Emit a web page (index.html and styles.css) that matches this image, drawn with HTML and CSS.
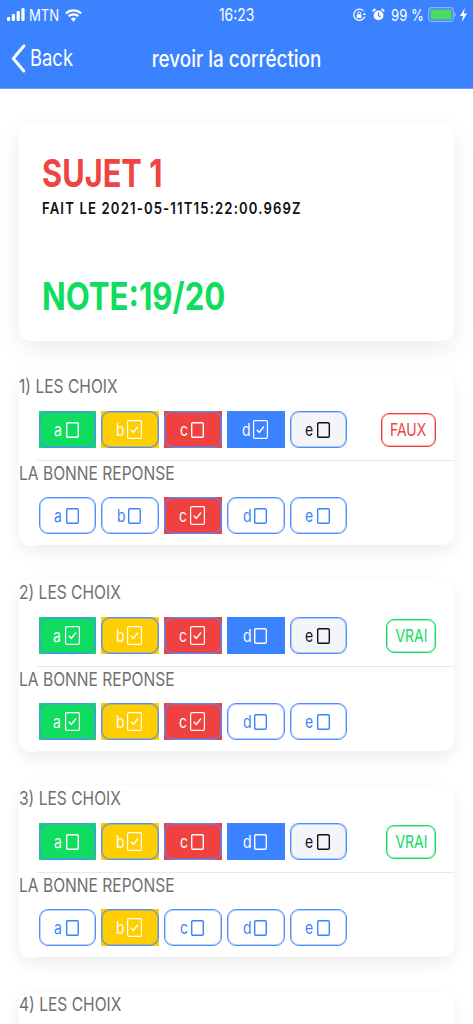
FILE: index.html
```html
<!DOCTYPE html>
<html lang="fr">
<head>
<meta charset="utf-8">
<title>revoir la corréction</title>
<link rel="stylesheet" href="styles.css">
</head>
<body>
<header class="top">
  <div class="status">
    <svg class="sig" viewBox="0 0 18 13"><rect x="0" y="9" width="3.200" height="4" rx="1"/><rect x="4.800" y="6" width="3.200" height="7" rx="1"/><rect x="9.600" y="3" width="3.200" height="10" rx="1"/><rect x="14.400" y="0" width="3.200" height="13" rx="1"/></svg>
    <span class="carrier"><span class="cond">MTN</span></span>
    <svg class="wifi" viewBox="0 0 17 14"><path d="M.9 5.400A11 11 0 0 1 16.100 5.400M3.600 8.300A7.200 7.200 0 0 1 13.400 8.300" fill="none" stroke="#fff" stroke-width="2.200"/><path d="M5.900 10.600A3.800 3.800 0 0 1 11.100 10.600L8.500 14Z" fill="#fff"/></svg>
    <div class="st-time"><span class="cond mid">16:23</span></div>
    <svg class="lock" viewBox="0 0 13 14"><path d="M10.400 2.700A5.600 5.600 0 1 0 11.800 8.600" fill="none" stroke="#fff" stroke-width="1.300"/><path d="M13 6.900H9.800L11.400 4.400Z" fill="#fff"/><rect x="3.800" y="6.200" width="4.800" height="3.800" rx=".6" fill="#fff"/><path d="M4.800 6.200V5.200A1.400 1.400 0 0 1 7.600 5.200V6.200" fill="none" stroke="#fff"/></svg>
    <svg class="alarm" viewBox="0 0 13 13"><circle cx="6.500" cy="7.400" r="4.900" fill="#fff"/><path d="M6.500 4.400V7.800L8.700 8.800" fill="none" stroke="#3b82ff" stroke-width="1.200"/><path d="M.7 3.400L3.400 1M12.300 3.400L9.600 1" stroke="#fff" stroke-width="1.800"/></svg>
    <span class="pct"><span class="cond">99 %</span></span>
    <svg class="batt" viewBox="0 0 29 15"><rect x=".6" y=".6" width="24.800" height="13.800" rx="3.500" fill="none" stroke="#8db5ff" stroke-width="1.200"/><rect x="2.400" y="2.600" width="21.200" height="9.800" rx="1.500" fill="#4cd964"/><path d="M26.500 5.200C28.500 5.600 28.500 9.400 26.500 9.800Z" fill="#8db5ff"/></svg>
    <svg class="bolt" viewBox="0 0 7 14"><path d="M4.800 0L0 8H3L1.900 14L7 5.600H3.800Z" fill="#fff"/></svg>
  </div>
  <div class="nav">
    <div class="back">
      <svg class="chev" viewBox="0 0 15 29"><path d="M12.800 2L2.300 14.500L12.800 27" fill="none" stroke="#fff" stroke-width="3" stroke-linecap="round" stroke-linejoin="round"/></svg>
      <span class="cond">Back</span>
    </div>
    <div class="title"><span class="cond mid">revoir la corréction</span></div>
  </div>
</header>

<main class="page">
  <section class="summary">
    <h1 class="subject"><span class="cond">SUJET 1</span></h1>
    <p class="date"><span class="cond">FAIT LE 2021-05-11T15:22:00.969Z</span></p>
    <p class="note"><span class="cond">NOTE:19/20</span></p>
  </section>

  <section class="q">
    <div class="q-label"><span class="cond">1) LES CHOIX</span></div>
    <div class="row">
      <div class="opt green"><span class="in"><span class="ltr">a</span><svg class="box"><use href="#off"/></svg></span></div>
      <div class="opt yellow wide"><span class="in"><span class="ltr">b</span><svg class="box on"><use href="#on"/></svg></span></div>
      <div class="opt red wide"><span class="in"><span class="ltr">c</span><svg class="box"><use href="#off"/></svg></span></div>
      <div class="opt blue wide"><span class="in"><span class="ltr">d</span><svg class="box on"><use href="#on"/></svg></span></div>
      <div class="opt grey"><span class="in"><span class="ltr">e</span><svg class="box"><use href="#off"/></svg></span></div>
      <div class="badge bad"><span class="cond mid">FAUX</span></div>
    </div>
    <div class="q-label lower"><span class="cond">LA BONNE REPONSE</span></div>
    <div class="row last">
      <div class="opt"><span class="in"><span class="ltr">a</span><svg class="box"><use href="#off"/></svg></span></div>
      <div class="opt wide"><span class="in"><span class="ltr">b</span><svg class="box"><use href="#off"/></svg></span></div>
      <div class="opt red wide"><span class="in"><span class="ltr">c</span><svg class="box on"><use href="#on"/></svg></span></div>
      <div class="opt wide"><span class="in"><span class="ltr">d</span><svg class="box"><use href="#off"/></svg></span></div>
      <div class="opt"><span class="in"><span class="ltr">e</span><svg class="box"><use href="#off"/></svg></span></div>
    </div>
    <div class="q-foot"></div>
  </section>

  <section class="q">
    <div class="q-label"><span class="cond">2) LES CHOIX</span></div>
    <div class="row">
      <div class="opt green"><span class="in"><span class="ltr">a</span><svg class="box on"><use href="#on"/></svg></span></div>
      <div class="opt yellow wide"><span class="in"><span class="ltr">b</span><svg class="box on"><use href="#on"/></svg></span></div>
      <div class="opt red wide"><span class="in"><span class="ltr">c</span><svg class="box on"><use href="#on"/></svg></span></div>
      <div class="opt blue wide"><span class="in"><span class="ltr">d</span><svg class="box"><use href="#off"/></svg></span></div>
      <div class="opt grey"><span class="in"><span class="ltr">e</span><svg class="box"><use href="#off"/></svg></span></div>
      <div class="badge good"><span class="cond mid">VRAI</span></div>
    </div>
    <div class="q-label lower"><span class="cond">LA BONNE REPONSE</span></div>
    <div class="row last">
      <div class="opt green"><span class="in"><span class="ltr">a</span><svg class="box on"><use href="#on"/></svg></span></div>
      <div class="opt yellow wide"><span class="in"><span class="ltr">b</span><svg class="box on"><use href="#on"/></svg></span></div>
      <div class="opt red wide"><span class="in"><span class="ltr">c</span><svg class="box on"><use href="#on"/></svg></span></div>
      <div class="opt wide"><span class="in"><span class="ltr">d</span><svg class="box"><use href="#off"/></svg></span></div>
      <div class="opt"><span class="in"><span class="ltr">e</span><svg class="box"><use href="#off"/></svg></span></div>
    </div>
    <div class="q-foot"></div>
  </section>

  <section class="q">
    <div class="q-label"><span class="cond">3) LES CHOIX</span></div>
    <div class="row">
      <div class="opt green"><span class="in"><span class="ltr">a</span><svg class="box"><use href="#off"/></svg></span></div>
      <div class="opt yellow wide"><span class="in"><span class="ltr">b</span><svg class="box on"><use href="#on"/></svg></span></div>
      <div class="opt red wide"><span class="in"><span class="ltr">c</span><svg class="box"><use href="#off"/></svg></span></div>
      <div class="opt blue wide"><span class="in"><span class="ltr">d</span><svg class="box"><use href="#off"/></svg></span></div>
      <div class="opt grey"><span class="in"><span class="ltr">e</span><svg class="box"><use href="#off"/></svg></span></div>
      <div class="badge good"><span class="cond mid">VRAI</span></div>
    </div>
    <div class="q-label lower"><span class="cond">LA BONNE REPONSE</span></div>
    <div class="row last">
      <div class="opt"><span class="in"><span class="ltr">a</span><svg class="box"><use href="#off"/></svg></span></div>
      <div class="opt yellow wide"><span class="in"><span class="ltr">b</span><svg class="box on"><use href="#on"/></svg></span></div>
      <div class="opt wide"><span class="in"><span class="ltr">c</span><svg class="box"><use href="#off"/></svg></span></div>
      <div class="opt wide"><span class="in"><span class="ltr">d</span><svg class="box"><use href="#off"/></svg></span></div>
      <div class="opt"><span class="in"><span class="ltr">e</span><svg class="box"><use href="#off"/></svg></span></div>
    </div>
    <div class="q-foot"></div>
  </section>

  <section class="q">
    <div class="q-label"><span class="cond">4) LES CHOIX</span></div>
  </section>
</main>

<svg class="defs" width="0" height="0" aria-hidden="true">
  <symbol id="off" viewBox="0 0 13 16"><rect x=".7" y=".7" width="11.600" height="14.600" rx="1.200" fill="none" stroke="currentColor" stroke-width="1.400"/></symbol>
  <symbol id="on" viewBox="0 0 15 19"><rect x=".6" y=".6" width="13.800" height="17.800" rx="1.200" fill="none" stroke="currentColor" stroke-width="1.200"/><path d="M3.800 9.800L6.300 12.500L11 6.500" fill="none" stroke="currentColor" stroke-width="1.400"/></symbol>
</svg>
</body>
</html>
```
FILE: styles.css
```css
* { box-sizing: border-box; }
html, body { margin: 0; height: 1024px; overflow: hidden; background: #fff; }
body { font-family: Inter, "Liberation Sans", sans-serif; color: #666; }

/* The reference is squeezed horizontally: all type is narrowed. */
.cond { display: inline-block; white-space: nowrap; transform: scaleX(.82); transform-origin: 0 50%; }
.cond.mid { transform-origin: 50% 50%; }

.top { height: 89px; background: #3b82ff; color: #fff; border-bottom: 1px solid #6ea3ff; }
.status { height: 29px; padding: 0 6px 0 7px; display: flex; align-items: center; font-size: 16px; position: relative; }
.sig { width: 18px; height: 13px; fill: #fff; flex: none; }
.carrier { width: 36px; margin-left: 4px; }
.wifi { width: 17px; height: 14px; flex: none; }
.st-time { position: absolute; left: 0; right: 0; text-align: center; font-size: 17px; }
.lock { width: 13px; height: 14px; margin-left: auto; margin-right: 6px; flex: none; }
.alarm { width: 13px; height: 13px; margin-right: 6px; flex: none; }
.pct { width: 37px; }
.batt { width: 29px; height: 15px; margin-right: 3px; flex: none; }
.bolt { width: 7px; height: 14px; flex: none; }

.nav { height: 59px; position: relative; display: flex; align-items: center; justify-content: center; }
.back { position: absolute; left: 11px; top: 15px; display: flex; align-items: center; gap: 4px; font-size: 23px; line-height: 29px; }
.back .cond { transform: scaleX(.8); }
.chev { width: 15px; height: 29px; flex: none; }
.title { font-size: 23px; font-weight: 500; }

.page { padding: 34px 19px 0; }
.summary { background: #fff; border-radius: 12px; height: 218px; box-shadow: 0 8px 24px rgba(0,0,0,.08); padding: 29px 22px 0 23px; }
.subject { margin: 0; font-size: 38px; line-height: 42px; font-weight: 700; color: #ef4444; }
.subject .cond { transform: scaleX(.81); }
.date { margin: 5px 0 0; font-size: 16px; line-height: 18px; font-weight: 600; color: #111; letter-spacing: 1.400px; }
.note { margin: 57px 0 0; font-size: 38px; line-height: 44px; font-weight: 700; color: #10dc60; }

.q { margin-top: 34px; background: #fff; border-radius: 12px; box-shadow: 0 6px 16px rgba(0,0,0,.07); height: 172px; }
.summary + .q { margin-top: 33px; }
.q-label { height: 26px; line-height: 26px; font-size: 19px; color: #707070; }
.q-label.lower { height: 37px; line-height: 26px; border-top: 1px solid #e8e8e8; margin-left: 18px; }
.q-label.lower .cond { margin-left: -18px; }
.row { display: flex; align-items: center; gap: 5px; padding-left: 20px; margin-top: 11px; height: 37px; margin-bottom: 12px; }
.row.last { margin: 0; }
.q-foot { height: 12px; margin-left: 18px; border-bottom: 1px solid #f0f0f0; border-bottom-right-radius: 12px; }
.opt { width: 57px; height: 37px; background: #fff; color: #3b82ff; font-size: 17px; flex: none; }
.opt.wide { width: 58px; }
.in { display: flex; align-items: center; justify-content: center; gap: 3.500px; height: 100%; padding: 0 3px 0 1px; border: 1px solid #4f8dff; border-radius: 9px; box-shadow: inset 0 0 0 1px rgba(79,141,255,.4); }
.ltr { display: inline-block; width: 8px; transform: scaleX(.82); transform-origin: 0 50%; }
.green { background: #10dc60; color: #fff; }
.yellow { background: #ffce00; color: #fff; }
.red { background: #f04141; color: #fff; }
.blue { background: #3b82ff; color: #fff; }
.blue .in { border-color: #3b82ff; box-shadow: none; }
.grey { background: #f4f5f8; color: #111; }
.box { width: 13px; height: 16px; flex: none; }
.box.on { width: 15px; height: 19px; }
.badge { margin-left: auto; margin-right: 18px; height: 34px; display: flex; align-items: center; justify-content: center; border: 1px solid; border-radius: 8px; font-size: 17px; }
.bad { color: #f04141; width: 55px; box-shadow: inset 0 0 0 1px rgba(240,65,65,.4); }
.good { color: #10dc60; width: 50px; box-shadow: inset 0 0 0 1px rgba(16,220,96,.4); }
.defs { position: absolute; }
```
